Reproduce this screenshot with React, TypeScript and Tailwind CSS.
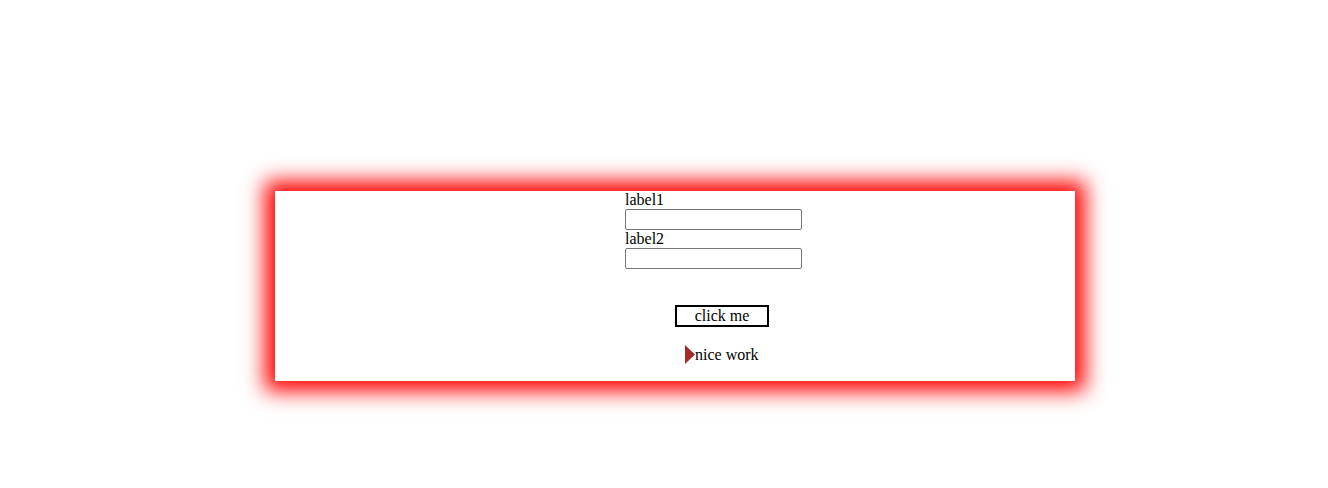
import React from "react";

const App = () => {
  return (
    <div className="w-[1328px] h-[488px] bg-white font-['Liberation_Serif',serif] text-[16px] leading-[18px] text-black pt-[191px] pl-[275px]">
      {/* Card */}
      <div className="w-[800px] h-[190px] bg-white shadow-[0_0_20px_10px_#ff0000] flex flex-col">
        {/* Form fields */}
        <div className="pl-[350px] flex flex-col items-start">
          <label>label1</label>
          <input type="text" className="w-[177px] h-[21px] border border-[#767676] rounded-[2px] bg-white" />
          <label>label2</label>
          <input type="text" className="w-[177px] h-[21px] border border-[#767676] rounded-[2px] bg-white" />
        </div>

        {/* Button */}
        <div className="pl-[400px] mt-[36px]">
          <button className="w-[94px] h-[22px] border-2 border-black bg-white text-center leading-[18px]">
            click me
          </button>
        </div>

        {/* Result */}
        <div className="pl-[410px] mt-[18px] flex items-start">
          <svg width="10" height="19" viewBox="0 0 10 19" className="shrink-0">
            <polygon points="0,0 10,9.5 0,19" fill="#a52a2a" />
          </svg>
          <span className="pt-[1px]">nice work</span>
        </div>
      </div>
    </div>
  );
};

export default App;
